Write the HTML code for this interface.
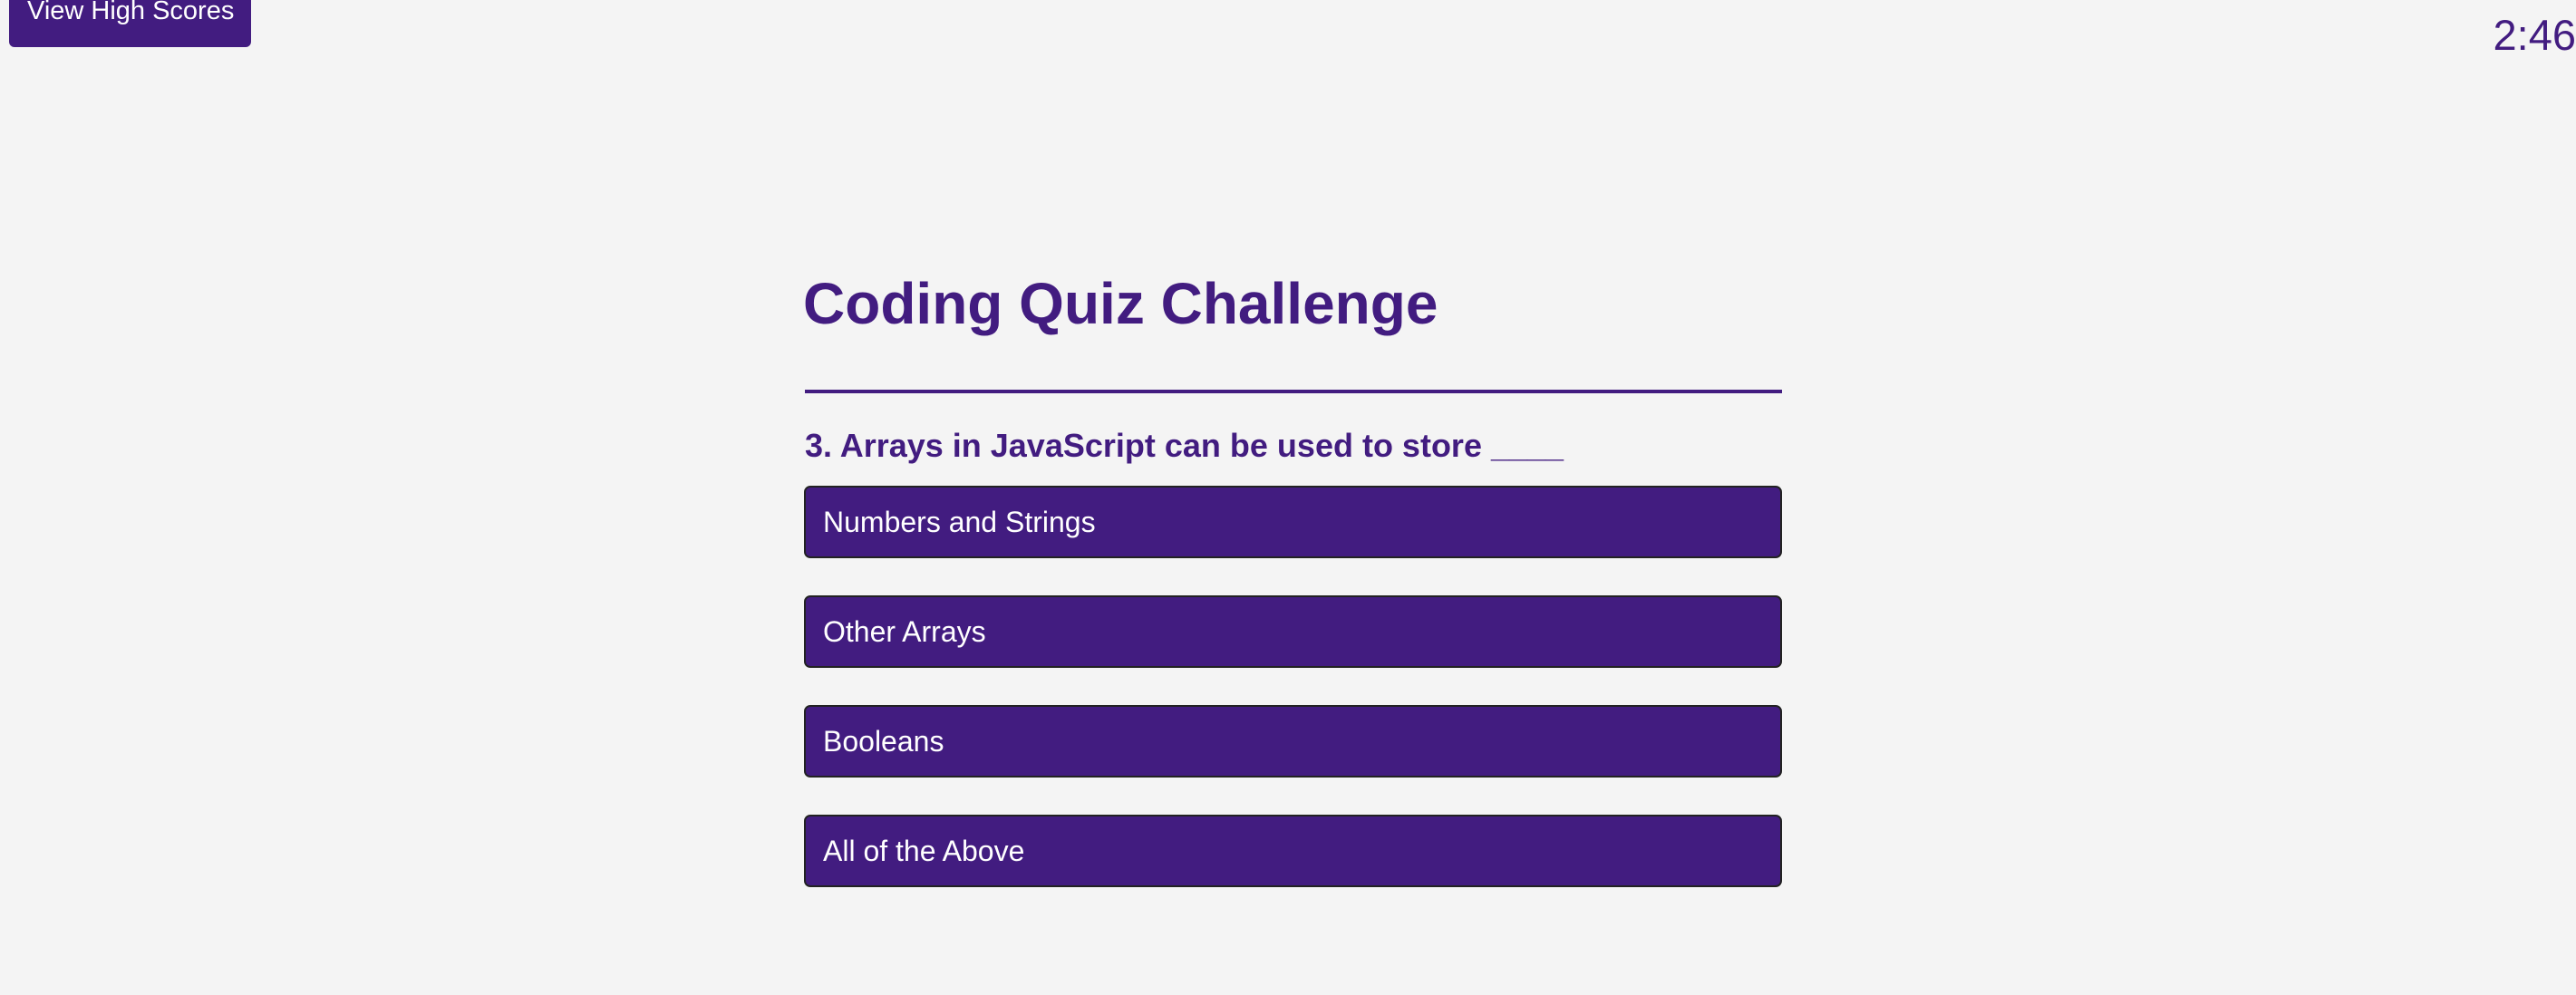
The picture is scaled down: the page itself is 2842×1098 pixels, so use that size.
<!DOCTYPE html>
<html><head><meta charset="utf-8"><style>
html,body{margin:0;padding:0;}
body{width:2842px;height:1098px;background:#f4f4f4;position:relative;overflow:hidden;font-family:"Liberation Sans",Arial,sans-serif;}
.hs{position:absolute;left:10px;top:-20px;width:267px;height:72px;background:#421c80;border-radius:6px;}
.hs span{position:absolute;left:20px;top:14px;color:#fff;font-size:29px;line-height:36px;white-space:nowrap;}
.timer{position:absolute;right:0;top:14px;color:#421c80;font-size:47px;line-height:50px;}
h1{position:absolute;left:886px;top:295px;margin:0;color:#421c80;font-size:64px;line-height:80px;font-weight:bold;white-space:nowrap;}
.line{position:absolute;left:888px;top:430px;width:1078px;height:4px;background:#421c80;}
.q{position:absolute;left:888px;top:470px;color:#421c80;font-size:36px;line-height:44px;font-weight:bold;white-space:nowrap;}
.b{position:absolute;left:887px;width:1075px;height:76px;background:#421c80;border:2px solid #222;border-radius:7px;color:#fff;font-size:32px;}
.b span{position:absolute;left:19px;top:19px;line-height:38px;}
</style></head><body>
<div class="hs"><span>View High Scores</span></div>
<div class="timer">2:46</div>
<h1>Coding Quiz Challenge</h1>
<div class="line"></div>
<div class="q">3. Arrays in JavaScript can be used to store ____</div>
<div class="b" style="top:536px"><span>Numbers and Strings</span></div>
<div class="b" style="top:657px"><span>Other Arrays</span></div>
<div class="b" style="top:778px"><span>Booleans</span></div>
<div class="b" style="top:899px"><span>All of the Above</span></div>
</body></html>
